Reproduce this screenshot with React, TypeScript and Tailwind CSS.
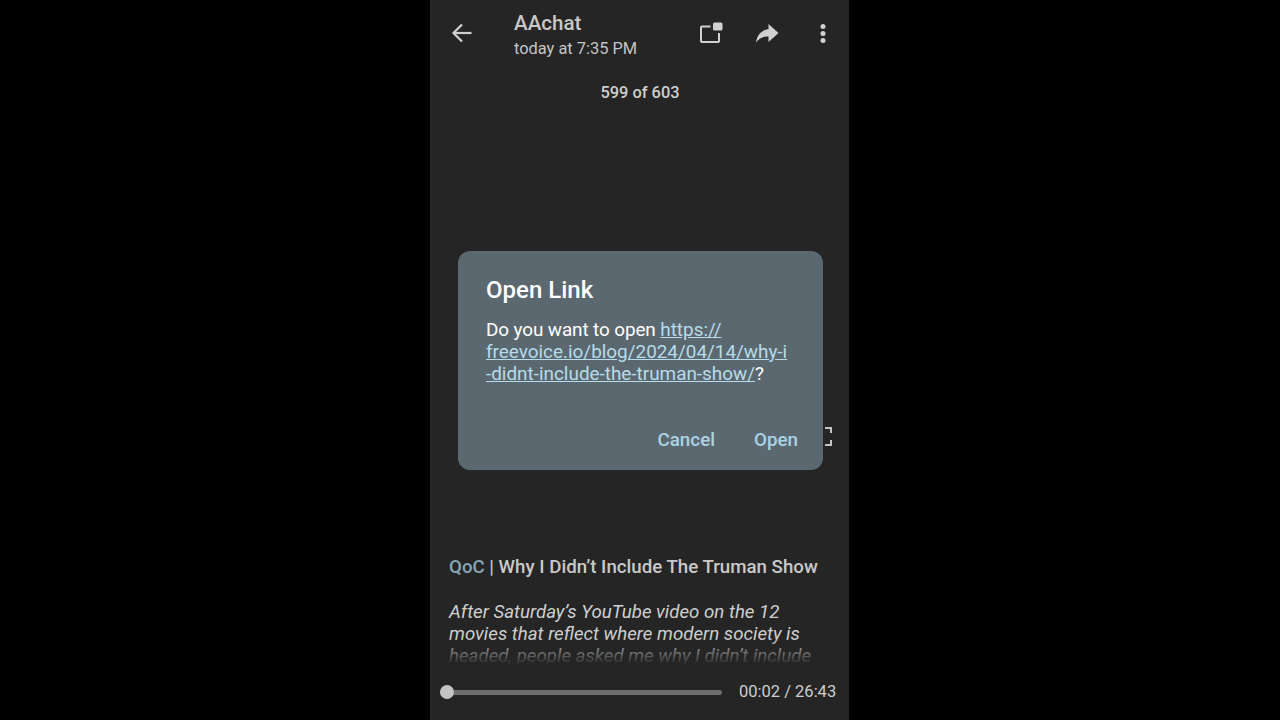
// App.tsx
// Phone screen recording: message viewer with an "Open Link" dialog on top

function BackIcon() {
  return (
    <svg width="24" height="24" viewBox="0 0 24 24" fill="none" stroke="#d0d0d0" strokeWidth="2.2">
      <path d="M21.5 12H4" />
      <path d="M12 3.5 3.5 12l8.5 8.5" />
    </svg>
  )
}

function PopOutIcon() {
  return (
    <svg width="24" height="24" viewBox="0 0 24 24" fill="none">
      <path d="M11.500 5.500H3a1 1 0 0 0-1 1V20a1 1 0 0 0 1 1h16a1 1 0 0 0 1-1v-8" stroke="#d0d0d0" strokeWidth="2" />
      <rect x="14" y="1.500" width="9.500" height="8" rx="1.500" fill="#d0d0d0" />
    </svg>
  )
}

function ForwardIcon() {
  return (
    <svg width="24" height="24" viewBox="0 0 24 24" fill="#d0d0d0">
      <path d="M13.500 3 23.500 12l-10 9v-5.500C7.500 15.500 4 17.500 1 21.500 2 14.500 6 9 13.500 8.300z" />
    </svg>
  )
}

function MoreIcon() {
  return (
    <svg width="24" height="24" viewBox="0 0 24 24" fill="#d0d0d0">
      <circle cx="12" cy="5.500" r="2.500" />
      <circle cx="12" cy="12.500" r="2.500" />
      <circle cx="12" cy="19.500" r="2.500" />
    </svg>
  )
}

export default function App() {
  return (
    <div className="h-[720px] w-[1280px] overflow-hidden bg-black pl-[430px] font-['Roboto',sans-serif]">
      <div className="relative flex h-[720px] w-[419px] flex-col bg-[#252525]">
        {/* header */}
        <div className="flex h-[66px] flex-none items-center pl-[20px]">
          <BackIcon />
          <div className="ml-[40px] flex-1 pt-[3px]">
            <div className="text-[20.6px] leading-[24px] font-medium text-[#c8c8c8]">AAchat</div>
            <div className="mt-[4px] text-[16.4px] leading-[20px] text-[#c4c4c4]">today at 7:35 PM</div>
          </div>
          <div className="flex items-center gap-[32px] pr-[14px]">
            <PopOutIcon />
            <ForwardIcon />
            <MoreIcon />
          </div>
        </div>

        <div className="mt-[16px] pl-[1px] text-center text-[16.4px] leading-[22px] font-medium text-[#cfcfcf]">599 of 603</div>

        {/* message body */}
        <div className="relative mt-[451px] h-[110px] flex-none overflow-hidden px-[19px]">
          <div className="text-[18.700px] leading-[24px] font-medium whitespace-nowrap text-[#c9c9c9]">
            <span className="text-[#86a8b8]">QoC</span> | Why I Didn’t Include The Truman Show
          </div>
          <div className="mt-[22px] text-[18.700px] leading-[22px] whitespace-nowrap text-[#cfcfcf] italic">
            <div>After Saturday’s YouTube video on the 12</div>
            <div>movies that reflect where modern society is</div>
            <div>headed, people asked me why I didn’t include</div>
          </div>
          <div className="absolute inset-x-0 bottom-0 h-[28px] bg-gradient-to-b from-[#25252500] to-[#252525]" />
        </div>

        {/* video controls */}
        <div className="mt-[17px] flex items-center pl-[10px]">
          <div className="relative h-[5px] w-[282px] rounded-full bg-[#6f6f6f]">
            <div className="absolute top-[-5px] left-0 h-[14px] w-[14px] rounded-full bg-[#c4c4c4]" />
          </div>
          <div className="ml-[17px] text-[16.500px] leading-[20px] text-[#cdcdcd]">00:02 / 26:43</div>
        </div>

        {/* fullscreen brackets peeking out behind the dialog */}
        <div className="absolute top-[427px] left-[395px] flex h-[19px] w-[7px] flex-col justify-between">
          <div className="h-[6px] border-t-2 border-r-2 border-[#c4c4c4]" />
          <div className="h-[6px] border-r-2 border-b-2 border-[#c4c4c4]" />
        </div>

        {/* dialog */}
        <div className="absolute top-[251px] left-[28px] h-[219px] w-[365px] rounded-[12px] bg-[#5c6870] pt-[24px] pl-[28px]">
          <div className="text-[24px] leading-[30px] font-medium text-white">Open Link</div>
          <div className="mt-[14px] text-[18.900px] leading-[22px] whitespace-nowrap text-white">
            <div>
              <span className="tracking-[-0.1px]">Do you want to open </span>
              <span className="text-[#b5dcea] underline">https://</span>
            </div>
            <div className="text-[#b5dcea] underline">freevoice.io/blog/2024/04/14/why-i</div>
            <div>
              <span className="text-[#b5dcea] underline">-didnt-include-the-truman-show/</span>?
            </div>
          </div>
          <div className="absolute right-[25px] bottom-[18px] flex gap-[39px] text-[18.800px] leading-[24px] font-medium text-[#a9d3e4]">
            <span>Cancel</span>
            <span>Open</span>
          </div>
        </div>
      </div>
    </div>
  )
}
